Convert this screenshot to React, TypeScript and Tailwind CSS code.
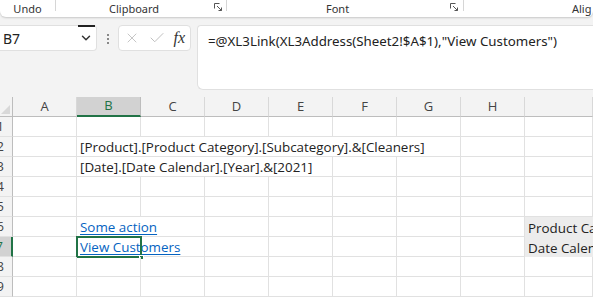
import { ChevronDown, X, Check } from "lucide-react";

const cols = ["A", "B", "C", "D", "E", "F", "G", "H", ""];
const font = { fontFamily: '"Noto Sans", "Open Sans", sans-serif' };

function Launcher() {
  return (
    <svg width="9" height="9" viewBox="0 0 9 9" className="text-[#555]">
      <path d="M0.5 0.5h5M0.5 0.5v5" stroke="currentColor" fill="none" />
      <path d="M3 3l4.5 4.5M7.5 4.5v3h-3" stroke="currentColor" fill="none" />
    </svg>
  );
}

function Cell({ span = 1, children, border = true, className = "" }: { span?: number; children?: React.ReactNode; border?: boolean; className?: string }) {
  const spans: Record<number, string> = { 1: "", 2: "col-span-2", 4: "col-span-4", 6: "col-span-6" };
  return (
    <div className={`relative flex items-end pl-[3px] leading-[18px] whitespace-nowrap border-b border-[#e1e1e1] ${border ? "border-r" : ""} ${spans[span]} ${className}`}>
      {children}
    </div>
  );
}

function RowHead({ n, active = false }: { n: number; active?: boolean }) {
  return (
    <div
      className={`flex items-center justify-end pr-[8px] overflow-hidden border-b border-[#e1e1e1] text-[13px] ${
        active ? "bg-[#d2d2d2] text-[#217346] border-r-2 border-r-[#217346]" : "bg-[#f3f3f3] text-[#444] border-r border-r-[#bdbdbd]"
      }`}
    >
      {n}
    </div>
  );
}

export default function App() {
  return (
    <div className="w-[593px] h-[297px] overflow-hidden bg-[#f3f3f3] text-[#222]" style={font}>
      {/* ribbon group labels */}
      <div className="h-[17px] bg-white rounded-b-[6px] shadow-[0_1px_2px_rgba(0,0,0,0.18)] flex items-start text-[11px] leading-[16px] text-[#333]">
        <div className="w-[55px] text-center pt-[1px]">Undo</div>
        <div className="w-px h-[11px] bg-[#d6d6d6]" />
        <div className="w-[170px] flex items-start pt-[1px]">
          <span className="ml-[53px]">Clipboard</span>
          <span className="ml-auto mr-[3px] mt-[2px]"><Launcher /></span>
        </div>
        <div className="w-px h-[11px] bg-[#d6d6d6]" />
        <div className="w-[236px] flex items-start pt-[1px]">
          <span className="ml-[99px]">Font</span>
          <span className="ml-auto mr-[4px] mt-[2px]"><Launcher /></span>
        </div>
        <div className="w-px h-[11px] bg-[#d6d6d6]" />
        <span className="ml-[108px] pt-[1px]">Alig</span>
      </div>

      {/* formula bar */}
      <div className="flex items-start mt-[8px] h-[65px]">
        <div className="relative w-[97px] h-[26px] bg-white rounded-r-[4px] border border-l-0 border-[#e0e0e0] flex items-center pl-[3px] text-[14px]">
          <span>B7</span>
          <div className="absolute top-[-1px] left-[78px] w-[17px] h-[2px] bg-[#222]" />
          <ChevronDown size={14} strokeWidth={2.5} className="ml-auto mr-[3px] text-[#333]" />
        </div>
        <div className="w-[21px] flex flex-col items-center gap-[2px] pt-[9px]">
          <div className="w-[2px] h-[2px] bg-[#888]" />
          <div className="w-[2px] h-[2px] bg-[#888]" />
          <div className="w-[2px] h-[2px] bg-[#888]" />
        </div>
        <div className="w-[73px] h-[26px] bg-white rounded-[4px] border border-[#e0e0e0] flex items-center pl-[5px] pr-[4px] gap-[6px]">
          <X size={16} strokeWidth={1.3} className="text-[#bdbdbd]" />
          <Check size={18} strokeWidth={1.3} className="text-[#bdbdbd] ml-[2px]" />
          <span className="ml-auto mr-[1px] italic text-[16px] text-[#333]" style={{ fontFamily: '"Liberation Serif", serif' }}>fx</span>
        </div>
        <div className="ml-[6px] flex-1 h-[65px] bg-white rounded-bl-[6px] rounded-tl-[4px] border border-r-0 border-[#e0e0e0] pl-[10px] pt-[6px] text-[13.3px] text-[#222]">
          =@XL3Link(XL3Address(Sheet2!$A$1),"View Customers")
        </div>
      </div>

      {/* sheet grid */}
      <div
        className="mt-[7px] grid grid-cols-[13px_repeat(8,64px)_1fr] auto-rows-[20px] bg-white text-[13.4px]"
        style={{ fontFamily: '"Open Sans", "Noto Sans", sans-serif' }}
      >
        <div className="relative bg-[#f3f3f3] border-r border-b border-[#bdbdbd]">
          <div className="absolute right-[2px] bottom-[2px] w-0 h-0 border-l-[9px] border-l-transparent border-b-[9px] border-b-[#d8d8d8]" />
        </div>
        {cols.map((c, i) => (
          <div
            key={i}
            className={`flex items-center justify-center text-[13px] ${
              c === "B"
                ? "bg-[#d2d2d2] text-[#217346] border-b-2 border-b-[#217346] border-r border-r-[#bdbdbd]"
                : "bg-[#f3f3f3] text-[#444] border-b border-b-[#bdbdbd] border-r border-r-[#d8d8d8]"
            }`}
          >
            {c}
          </div>
        ))}

        {/* row 1 */}
        <RowHead n={1} />
        {cols.map((_, i) => <Cell key={i} />)}

        {/* row 2 */}
        <RowHead n={2} />
        <Cell />
        <Cell span={6}>[Product].[Product Category].[Subcategory].&amp;[Cleaners]</Cell>
        <Cell />
        <Cell />

        {/* row 3 */}
        <RowHead n={3} />
        <Cell />
        <Cell span={4}>[Date].[Date Calendar].[Year].&amp;[2021]</Cell>
        <Cell />
        <Cell />
        <Cell />
        <Cell />

        {/* row 4 and 5 */}
        {[4, 5].map((n) => (
          <div key={n} className="contents">
            <RowHead n={n} />
            {cols.map((_, i) => <Cell key={i} />)}
          </div>
        ))}

        {/* row 6 */}
        <RowHead n={6} />
        <Cell />
        <Cell span={2}><span className="text-[#0563c1] underline underline-offset-2">Some action</span></Cell>
        <Cell /><Cell /><Cell /><Cell /><Cell />
        <div className="bg-[#ececec] flex items-end pl-[3px] leading-[18px] whitespace-nowrap overflow-hidden">Product Category</div>

        {/* row 7 */}
        <RowHead n={7} active />
        <Cell />
        <Cell span={2}>
          <span className="text-[#0563c1] underline underline-offset-2">View Customers</span>
          <div className="absolute left-[-1px] top-[-1px] w-[66px] h-[22px] border-2 border-[#217346]" />
          <div className="absolute left-[62px] top-[18px] w-[5px] h-[5px] bg-[#217346] border border-white" />
        </Cell>
        <Cell /><Cell /><Cell /><Cell /><Cell />
        <div className="bg-[#ececec] flex items-end pl-[3px] leading-[18px] whitespace-nowrap overflow-hidden">Date Calendar</div>

        {/* rows 8, 9 */}
        {[8, 9].map((n) => (
          <div key={n} className="contents">
            <RowHead n={n} />
            {cols.map((_, i) => <Cell key={i} />)}
          </div>
        ))}
      </div>
    </div>
  );
}
